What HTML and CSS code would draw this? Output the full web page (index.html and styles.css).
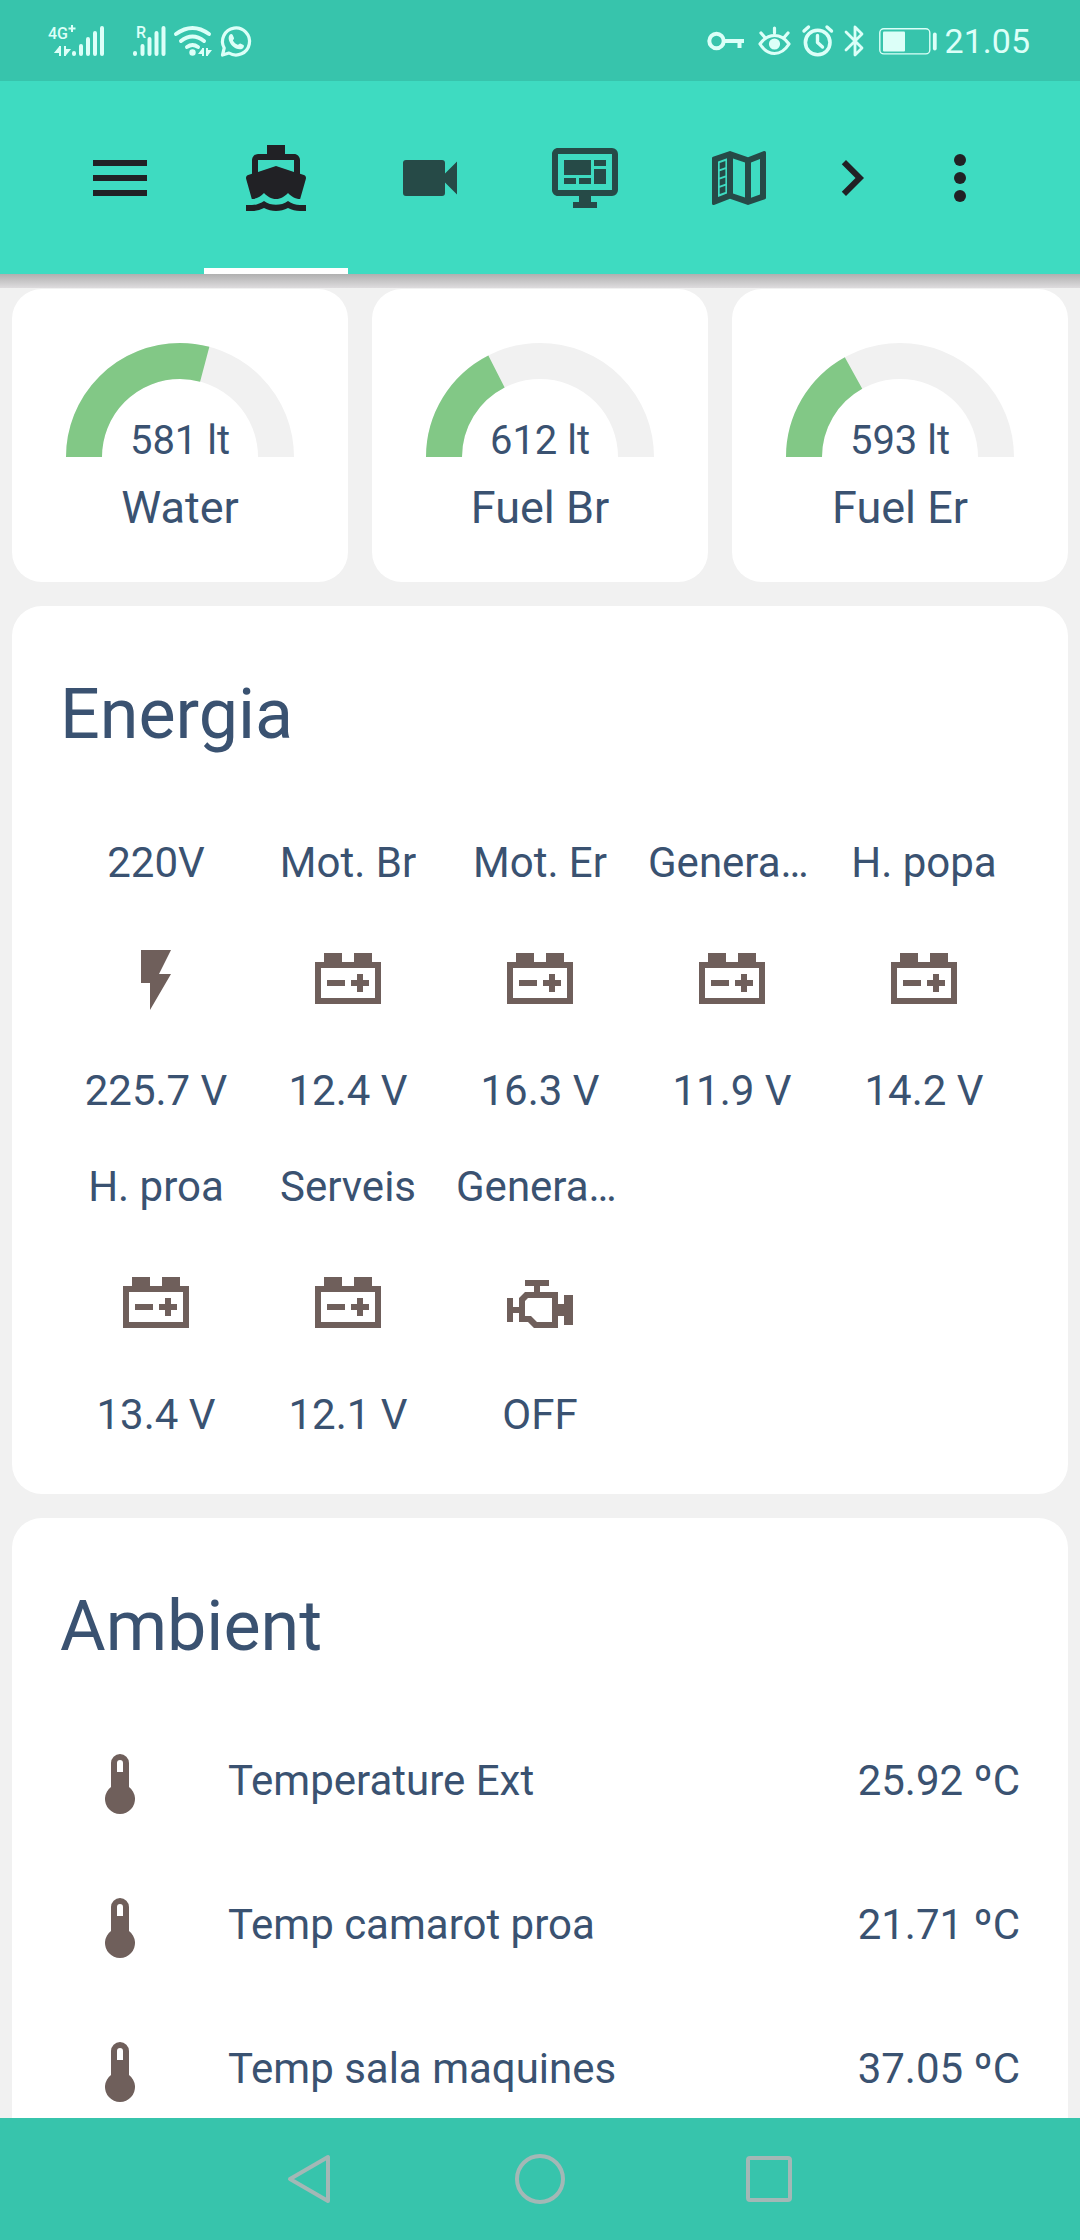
FILE: index.html
```html
<!DOCTYPE html>
<html lang="ca">
<head>
<meta charset="utf-8">
<meta name="viewport" content="width=device-width, initial-scale=1">
<title>Energia</title>
<link rel="stylesheet" href="styles.css">
</head>
<body>
<svg class="sprite" aria-hidden="true">
  <symbol id="i-menu" viewBox="0 0 24 24"><path d="M3 6H21V8H3V6M3 11H21V13H3V11M3 16H21V18H3V16Z"/></symbol>
  <symbol id="i-ferry" viewBox="0 0 24 24"><path d="M6,6H18V9.96L12,8L6,9.96M3.94,19H4C5.6,19 7,18.12 8,17C9,18.12 10.4,19 12,19C13.6,19 15,18.12 16,17C17,18.12 18.4,19 20,19H20.05L21.95,12.31C22.03,12.06 22,11.78 21.89,11.54C21.76,11.3 21.55,11.12 21.29,11.04L20,10.62V6C20,4.89 19.1,4 18,4H15V1H9V4H6A2,2 0 0,0 4,6V10.62L2.71,11.04C2.45,11.12 2.24,11.3 2.11,11.54C2,11.78 1.97,12.06 2.05,12.31M20,21C18.61,21 17.22,20.53 16,19.67C13.56,21.38 10.44,21.38 8,19.67C6.78,20.53 5.39,21 4,21H2V23H4C5.37,23 6.74,22.65 8,22C10.5,23.3 13.5,23.3 16,22C17.26,22.65 18.62,23 20,23H22V21H20Z"/></symbol>
  <symbol id="i-video" viewBox="0 0 24 24"><path d="M17,10.5V7A1,1 0 0,0 16,6H4A1,1 0 0,0 3,7V17A1,1 0 0,0 4,18H16A1,1 0 0,0 17,17V13.5L21,17.5V6.5L17,10.5Z"/></symbol>
  <symbol id="i-monitor" viewBox="0 0 24 24"><path d="M21,16V4H3V16H21M21,2A2,2 0 0,1 23,4V16A2,2 0 0,1 21,18H14V20H16V22H8V20H10V18H3C1.89,18 1,17.1 1,16V4C1,2.89 1.89,2 3,2H21M5,6H14V11H5V6M15,6H19V8H15V6M19,9V14H15V9H19M5,12H9V14H5V12M10,12H14V14H10V12Z"/></symbol>
  <symbol id="i-map" viewBox="0 0 24 24"><path d="M9,3L3.36,4.9C3.15,4.97 3,5.15 3,5.38V20.5A0.5,0.5 0 0,0 3.5,21L3.66,20.97L9,18.9L15,21L20.64,19.1C20.85,19.03 21,18.85 21,18.62V3.5A0.5,0.5 0 0,0 20.5,3L20.34,3.03L15,5.1L9,3M8,5.45V17.15L5,18.31V6.46L8,5.45M10,5.47L14,6.87V18.53L10,17.13V5.47M19,5.7V17.54L16,18.55V6.86L19,5.7M7.46,6.3L5.57,6.97V9.12L7.46,8.45V6.3M7.46,9.05L5.57,9.72V11.87L7.46,11.2V9.05M7.46,11.8L5.57,12.47V14.62L7.46,13.95V11.8M7.46,14.55L5.57,15.22V17.37L7.46,16.7V14.55Z"/></symbol>
  <symbol id="i-chevron" viewBox="0 0 24 24"><path d="M8.59,16.58L13.17,12L8.59,7.41L10,6L16,12L10,18L8.59,16.58Z"/></symbol>
  <symbol id="i-dots" viewBox="0 0 24 24"><circle cx="12" cy="6" r="2"/><circle cx="12" cy="12" r="2"/><circle cx="12" cy="18" r="2"/></symbol>
  <symbol id="i-flash" viewBox="0 0 24 24"><path d="M7,2V13H10V22L17,10H13L17,2H7Z"/></symbol>
  <symbol id="i-battery" viewBox="0 0 24 24"><path d="M4,3V6H1V20H23V6H20V3H14V6H10V3H4M3,8H21V18H3V8M15,10V12H13V14H15V16H17V14H19V12H17V10H15M5,12V14H11V12H5Z"/></symbol>
  <symbol id="i-engine" viewBox="0 0 24 24"><path d="M8,10H16V18H11L9,16H7V11M7,4V6H10V8H7L5,10V13H3V10H1V18H3V15H5V18H8L10,20H18V16H20V19H23V9H20V12H18V8H12V6H15V4H7Z"/></symbol>
  <symbol id="i-thermo" viewBox="0 0 24 24"><path d="M15,13V5A3,3 0 0,0 9,5V13A5,5 0 1,0 15,13M12,4A1,1 0 0,1 13,5V8H11V5A1,1 0 0,1 12,4Z"/></symbol>
</svg>

<div class="status-bar">
  <svg class="status-icons" width="206" height="40" viewBox="48 20 206 40" fill="currentColor" role="img" aria-label="Network status">
    <text class="network-text" x="48" y="38">4G</text>
    <path d="M72 24v7M68.500 27.500h7" stroke="currentColor" stroke-width="2" fill="none"/>
    <path d="M60 45v10M60 46l-4 5h4M65 45v10M65 54l4-5h-4" stroke="currentColor" stroke-width="2"/>
    <g stroke="currentColor" stroke-width="4" stroke-linecap="round">
      <path d="M74 52v1M81 45v8M88 38v15M95 32v21M102 27v26"/>
      <path d="M135 52v1M142.500 45v8M149.500 38v15M156.500 32v21M163.500 27v26"/>
    </g>
    <text class="network-text" x="136" y="37">R</text>
    <g fill="none" stroke="currentColor" stroke-width="4" stroke-linecap="round">
      <path d="M176 33q16.500-12 33 0M181 40q11.500-9 23 0M187 46q5.500-4 11 0"/>
    </g>
    <circle cx="192.500" cy="51.500" r="3.200"/>
    <path d="M203 47v8M203 48l-3 4h3M207 47v8M207 54l3-4h-3" stroke="currentColor" stroke-width="2"/>
    <path d="M222.500 54l1.700-7A13.500 13.500 0 1 1 229 52z" fill="none" stroke="currentColor" stroke-width="3.200" stroke-linejoin="round"/>
    <path d="M229.500 34c1-1.500 2.500-1.500 3.200 0l1.300 3c.4 1-1.300 2-1 2.700 1.300 2 2.500 3.200 4.700 4 .9.300 1.700-1.500 2.600-1.200l3.200 1.500c.8.700.6 2.400-.8 3.400-3 2-7.200.3-10-2.200-2.600-2.500-5.500-7.500-3.200-11.200z"/>
  </svg>
  <div class="status-side">
    <svg width="232" height="40" viewBox="706 20 232 40" fill="none" stroke="currentColor" stroke-width="4" stroke-linecap="round" stroke-linejoin="round" role="img" aria-label="Key, eye comfort, alarm, Bluetooth, battery 50%">
      <circle cx="715.500" cy="40" r="7.200"/>
      <path d="M723 40h20M738.500 41v6" stroke-linecap="butt"/>
      <path d="M759 43q6-8.500 14.500-8.500T788 43q-6 9.500-14.500 9.500T759 43z" stroke-width="3.200"/>
      <circle cx="773.500" cy="43" r="4.600" fill="currentColor" stroke-width="2"/>
      <path d="M773.500 27v5M760 32l3.500 4M787 32l-3.500 4" stroke-width="3.200"/>
      <circle cx="816.700" cy="41.500" r="12.300" stroke-width="3.600"/>
      <path d="M803 30l4.500-4M830.500 30l-4.500-4M816.500 34.500v7l5 4.500" stroke-width="3.400"/>
      <path d="M845 31l16 16-7 7V26l7 7-16 16" stroke-width="2.800"/>
      <rect x="878.800" y="27.700" width="50" height="25.200" rx="4" stroke-width="1.400"/>
      <rect x="882" y="30.500" width="22" height="20" rx="1" fill="currentColor" stroke="none"/>
      <path d="M933.800 33.500v14" stroke-width="3.800"/>
    </svg>
    <time class="clock">21.05</time>
  </div>
</div>

<header class="toolbar">
  <button class="icon-button" type="button" aria-label="Menu"><svg class="icon"><use href="#i-menu"/></svg></button>
  <nav class="tabs" aria-label="Views">
    <a class="tab tab-active" href="#ship" aria-current="page" aria-label="Ship"><svg class="icon"><use href="#i-ferry"/></svg></a>
    <a class="tab" href="#cameras" aria-label="Cameras"><svg class="icon"><use href="#i-video"/></svg></a>
    <a class="tab" href="#monitor" aria-label="Monitor"><svg class="icon"><use href="#i-monitor"/></svg></a>
    <a class="tab" href="#map" aria-label="Map"><svg class="icon"><use href="#i-map"/></svg></a>
  </nav>
  <button class="icon-button icon-button-narrow" type="button" aria-label="Next tabs"><svg class="icon"><use href="#i-chevron"/></svg></button>
  <button class="icon-button" type="button" aria-label="More options"><svg class="icon"><use href="#i-dots"/></svg></button>
</header>

<main class="view" id="ship">
  <section class="gauges" aria-label="Tanks">
    <article class="card gauge">
      <svg class="gauge-dial" width="228" height="114" viewBox="0 0 228 114">
        <path class="gauge-track" d="M18 114A96 96 0 0 1 210 114"/>
        <path class="gauge-fill" pathLength="180" stroke-dasharray="105 400" d="M18 114A96 96 0 0 1 210 114"/>
        <text class="gauge-value" x="114" y="111">581 lt</text>
      </svg>
      <h2 class="gauge-name">Water</h2>
    </article>
    <article class="card gauge">
      <svg class="gauge-dial" width="228" height="114" viewBox="0 0 228 114">
        <path class="gauge-track" d="M18 114A96 96 0 0 1 210 114"/>
        <path class="gauge-fill" pathLength="180" stroke-dasharray="63 400" d="M18 114A96 96 0 0 1 210 114"/>
        <text class="gauge-value" x="114" y="111">612 lt</text>
      </svg>
      <h2 class="gauge-name">Fuel Br</h2>
    </article>
    <article class="card gauge">
      <svg class="gauge-dial" width="228" height="114" viewBox="0 0 228 114">
        <path class="gauge-track" d="M18 114A96 96 0 0 1 210 114"/>
        <path class="gauge-fill" pathLength="180" stroke-dasharray="61 400" d="M18 114A96 96 0 0 1 210 114"/>
        <text class="gauge-value" x="114" y="111">593 lt</text>
      </svg>
      <h2 class="gauge-name">Fuel Er</h2>
    </article>
  </section>

  <section class="card panel">
    <h2 class="panel-title">Energia</h2>
    <div class="glance">
      <div class="glance-item"><span class="glance-label">220V</span><span class="state-icon"><svg class="icon"><use href="#i-flash"/></svg></span><span>225.7 V</span></div>
      <div class="glance-item"><span class="glance-label">Mot. Br</span><span class="state-icon"><svg class="icon"><use href="#i-battery"/></svg></span><span>12.4 V</span></div>
      <div class="glance-item"><span class="glance-label">Mot. Er</span><span class="state-icon"><svg class="icon"><use href="#i-battery"/></svg></span><span>16.3 V</span></div>
      <div class="glance-item"><span class="glance-label">Generador</span><span class="state-icon"><svg class="icon"><use href="#i-battery"/></svg></span><span>11.9 V</span></div>
      <div class="glance-item"><span class="glance-label">H. popa</span><span class="state-icon"><svg class="icon"><use href="#i-battery"/></svg></span><span>14.2 V</span></div>
      <div class="glance-item"><span class="glance-label">H. proa</span><span class="state-icon"><svg class="icon"><use href="#i-battery"/></svg></span><span>13.4 V</span></div>
      <div class="glance-item"><span class="glance-label">Serveis</span><span class="state-icon"><svg class="icon"><use href="#i-battery"/></svg></span><span>12.1 V</span></div>
      <div class="glance-item"><span class="glance-label">Generador</span><span class="state-icon"><svg class="icon"><use href="#i-engine"/></svg></span><span>OFF</span></div>
    </div>
  </section>

  <section class="card panel">
    <h2 class="panel-title">Ambient</h2>
    <ul class="entities">
      <li class="entity"><span class="state-icon"><svg class="icon"><use href="#i-thermo"/></svg></span><span class="entity-name">Temperature Ext</span><span>25.92 ºC</span></li>
      <li class="entity"><span class="state-icon"><svg class="icon"><use href="#i-thermo"/></svg></span><span class="entity-name">Temp camarot proa</span><span>21.71 ºC</span></li>
      <li class="entity"><span class="state-icon"><svg class="icon"><use href="#i-thermo"/></svg></span><span class="entity-name">Temp sala maquines</span><span>37.05 ºC</span></li>
    </ul>
  </section>
</main>

<nav class="system-nav" aria-label="System">
  <button class="system-button" type="button" aria-label="Back"><svg width="54" height="54" viewBox="0 0 54 54"><path d="M45 5V49L7 27Z"/></svg></button>
  <button class="system-button" type="button" aria-label="Home"><svg width="54" height="54" viewBox="0 0 54 54"><circle cx="27" cy="27" r="23"/></svg></button>
  <button class="system-button" type="button" aria-label="Recent apps"><svg width="54" height="54" viewBox="0 0 54 54"><rect x="5" y="6" width="42" height="42" rx="2"/></svg></button>
</nav>
</body>
</html>
```
FILE: styles.css
```css
:root {
  --bar: #37c4ac;
  --toolbar: #3edbc1;
  --page: #f1f1f1;
  --card: #ffffff;
  --text: #3a5271;
  --state: #6f5f5b;
  --ink: #212125;
}

* {
  box-sizing: border-box;
}

body {
  margin: 0;
  height: 100vh;
  display: flex;
  flex-direction: column;
  overflow: hidden;
  background: var(--page);
  color: var(--text);
  font: 42px/58px Roboto, "Liberation Sans", sans-serif;
}

h2, ul {
  margin: 0;
  padding: 0;
  font-weight: 400;
  list-style: none;
}

button {
  border: 0;
  padding: 0;
  background: none;
  color: inherit;
}

svg {
  display: block;
}

.sprite {
  display: none;
}

.icon {
  width: 72px;
  height: 72px;
  fill: currentColor;
}

/* Phone status bar */
.status-bar {
  flex: none;
  display: flex;
  align-items: center;
  justify-content: space-between;
  height: 81px;
  padding: 0 50px 0 48px;
  background: var(--bar);
  color: #dcfff8;
}

.status-icons {
  overflow: visible;
}

.status-side {
  display: flex;
  align-items: center;
  gap: 6px;
}

.network-text {
  font-size: 16px;
  font-weight: 500;
}

.clock {
  font-size: 34px;
  line-height: 40px;
}

/* App toolbar */
.toolbar {
  position: relative;
  z-index: 1;
  flex: none;
  display: flex;
  height: 193px;
  padding: 0 48px;
  background: var(--toolbar);
  color: var(--ink);
}

.toolbar::after {
  content: "";
  position: absolute;
  top: 100%;
  left: 0;
  right: 0;
  height: 14px;
  background: linear-gradient(#b0b0b0, #dedcde);
}

.icon-button {
  flex: none;
  display: flex;
  align-items: center;
  justify-content: center;
  width: 144px;
}

.icon-button-narrow {
  width: 72px;
}

.tabs {
  flex: 1;
  display: flex;
  justify-content: space-between;
  margin: 0 5px 0 12px;
}

.tab {
  display: flex;
  align-items: center;
  justify-content: center;
  width: 144px;
  border-bottom: 6px solid transparent;
  padding-top: 6px;
  color: #264a47;
}

.tab-active {
  border-bottom-color: #ffffff;
  color: var(--ink);
}

/* Dashboard */
.view {
  flex: 1;
  min-height: 0;
  overflow: hidden;
  display: flex;
  flex-direction: column;
  gap: 24px;
  padding: 15px 12px 0;
}

.card {
  flex: none;
  border-radius: 30px;
  background: var(--card);
}

.gauges {
  flex: none;
  display: grid;
  grid-template-columns: repeat(3, 1fr);
  gap: 24px;
}

.gauge {
  display: flex;
  flex-direction: column;
  align-items: center;
  gap: 21px;
  padding: 54px 12px 44px;
}

.gauge-dial {
  overflow: visible;
}

.gauge-track,
.gauge-fill {
  fill: none;
  stroke: #f1f1f1;
  stroke-width: 36px;
}

.gauge-fill {
  stroke: #82c886;
}

.gauge-value {
  font-size: 40px;
  fill: var(--text);
  text-anchor: middle;
}

.gauge-name {
  font-size: 45px;
  line-height: 60px;
}

.panel {
  padding: 36px 48px 50px;
}

.panel-title {
  font-size: 70px;
  line-height: 144px;
}

.state-icon {
  display: flex;
  align-items: center;
  justify-content: center;
  padding-top: 6px;
  color: var(--state);
}

.glance {
  display: grid;
  grid-template-columns: repeat(5, 1fr);
  row-gap: 38px;
  padding-top: 48px;
}

.glance-item {
  display: flex;
  flex-direction: column;
  align-items: center;
  min-width: 0;
  padding: 0 12px;
  white-space: nowrap;
}

.glance-label {
  max-width: 100%;
  overflow: hidden;
  text-overflow: ellipsis;
}

.glance-item .state-icon {
  height: 170px;
}

.entities {
  display: flex;
  flex-direction: column;
  gap: 24px;
  padding-top: 23px;
}

.entity {
  display: flex;
  align-items: center;
  height: 120px;
}

.entity .state-icon {
  width: 120px;
  height: 120px;
}

.entity-name {
  flex: 1;
  padding-left: 48px;
}

/* Phone navigation bar */
.system-nav {
  flex: none;
  display: flex;
  justify-content: center;
  height: 122px;
  background: var(--bar);
}

.system-button {
  display: flex;
  align-items: center;
  justify-content: center;
  width: 230px;
}

.system-button svg {
  fill: none;
  stroke: #a3b8b6;
  stroke-width: 4px;
  stroke-linejoin: round;
}
```
